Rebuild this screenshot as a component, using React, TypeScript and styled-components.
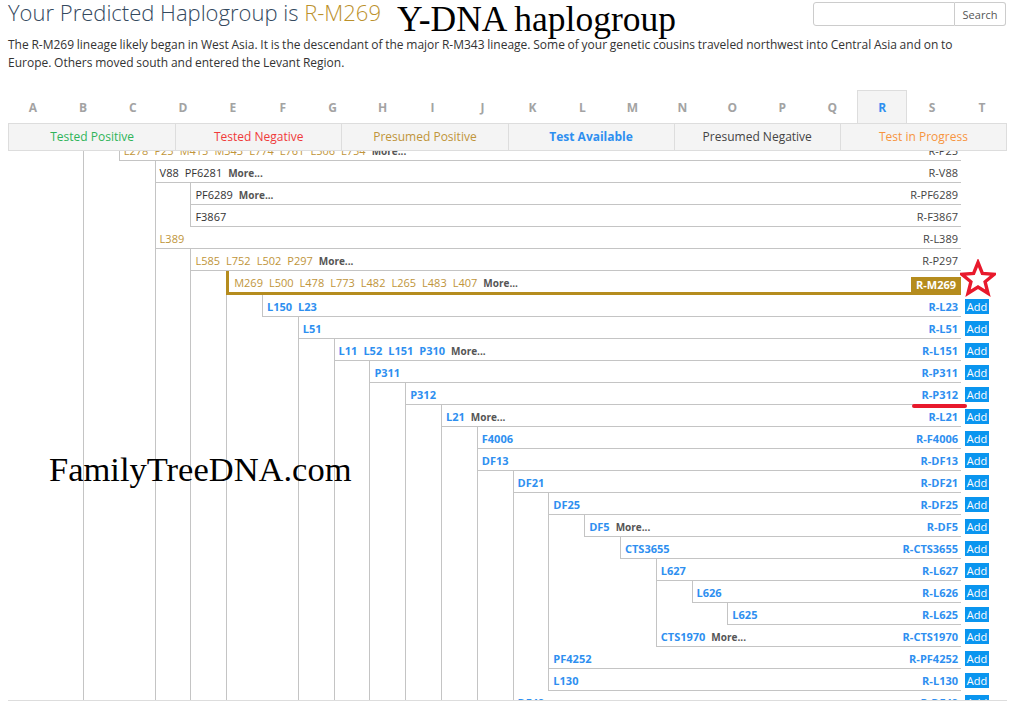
import React from "react"
import styled, { createGlobalStyle } from "styled-components"

type Kind = "pp" | "pn" | "ta" | "cur"

interface HapNode {
  snps: string
  name: string
  kind: Kind
  more?: boolean
  last?: boolean
  kids?: HapNode[]
}

const LINE = "#c4c4c4"
const GOLD = "#b58c1e"
const BLUE = "#2e8ff0"

const tree: HapNode[] = [
  {
    kind: "pp",
    snps: "M173 M306 P225 P231 P233",
    more: true,
    name: "R-M173",
    kids: [
      {
        kind: "pp",
        snps: "L278 P25 M415 M343 L774 L761 L506 L754",
        more: true,
        name: "R-P25",
        last: true,
        kids: [
          {
            kind: "pn",
            snps: "V88 PF6281",
            more: true,
            name: "R-V88",
            kids: [
              { kind: "pn", snps: "PF6289", more: true, name: "R-PF6289" },
              { kind: "pn", snps: "F3867", name: "R-F3867", last: true },
            ],
          },
          {
            kind: "pp",
            snps: "L389",
            name: "R-L389",
            kids: [
              {
                kind: "pp",
                snps: "L585 L752 L502 P297",
                more: true,
                name: "R-P297",
                kids: [
                  {
                    kind: "cur",
                    snps: "M269 L500 L478 L773 L482 L265 L483 L407",
                    more: true,
                    name: "R-M269",
                    kids: [
                      {
                        kind: "ta",
                        snps: "L150 L23",
                        name: "R-L23",
                        last: true,
                        kids: [
                          {
                            kind: "ta",
                            snps: "L51",
                            name: "R-L51",
                            kids: [
                              {
                                kind: "ta",
                                snps: "L11 L52 L151 P310",
                                more: true,
                                name: "R-L151",
                                kids: [
                                  {
                                    kind: "ta",
                                    snps: "P311",
                                    name: "R-P311",
                                    kids: [
                                      {
                                        kind: "ta",
                                        snps: "P312",
                                        name: "R-P312",
                                        kids: [
                                          {
                                            kind: "ta",
                                            snps: "L21",
                                            more: true,
                                            name: "R-L21",
                                            kids: [
                                              { kind: "ta", snps: "F4006", name: "R-F4006" },
                                              {
                                                kind: "ta",
                                                snps: "DF13",
                                                name: "R-DF13",
                                                kids: [
                                                  {
                                                    kind: "ta",
                                                    snps: "DF21",
                                                    name: "R-DF21",
                                                    kids: [
                                                      {
                                                        kind: "ta",
                                                        snps: "DF25",
                                                        name: "R-DF25",
                                                        kids: [
                                                          {
                                                            kind: "ta",
                                                            snps: "DF5",
                                                            more: true,
                                                            name: "R-DF5",
                                                            last: true,
                                                            kids: [
                                                              {
                                                                kind: "ta",
                                                                snps: "CTS3655",
                                                                name: "R-CTS3655",
                                                                last: true,
                                                                kids: [
                                                                  {
                                                                    kind: "ta",
                                                                    snps: "L627",
                                                                    name: "R-L627",
                                                                    kids: [
                                                                      {
                                                                        kind: "ta",
                                                                        snps: "L626",
                                                                        name: "R-L626",
                                                                        last: true,
                                                                        kids: [
                                                                          { kind: "ta", snps: "L625", name: "R-L625", last: true },
                                                                        ],
                                                                      },
                                                                    ],
                                                                  },
                                                                  { kind: "ta", snps: "CTS1970", more: true, name: "R-CTS1970", last: true },
                                                                ],
                                                              },
                                                            ],
                                                          },
                                                        ],
                                                      },
                                                      { kind: "ta", snps: "PF4252", name: "R-PF4252" },
                                                      { kind: "ta", snps: "L130", name: "R-L130", last: true },
                                                    ],
                                                  },
                                                  { kind: "ta", snps: "DF49", name: "R-DF49" },
                                                ],
                                              },
                                            ],
                                          },
                                        ],
                                      },
                                    ],
                                  },
                                ],
                              },
                            ],
                          },
                        ],
                      },
                    ],
                  },
                ],
              },
            ],
          },
        ],
      },
    ],
  },
]

const letters = "ABCDEFGHIJKLMNOPQRST".split("")

const legend = [
  { label: "Tested Positive", color: "#2fb45a" },
  { label: "Tested Negative", color: "#f03a3a" },
  { label: "Presumed Positive", color: "#c0953a" },
  { label: "Test Available", color: BLUE, bold: true },
  { label: "Presumed Negative", color: "#444" },
  { label: "Test in Progress", color: "#f7953f" },
]

function Branch({ nodes, top }: { nodes: HapNode[]; top?: boolean }) {
  return (
    <List $top={top}>
      {nodes.map((n) => (
        <Item key={n.name} $last={n.last}>
          <Row>
            <Cell $cur={n.kind === "cur"}>
              {n.snps.split(" ").map((s) => (
                <Snp key={s} $kind={n.kind}>
                  {s}
                </Snp>
              ))}
              {n.more && <More>More...</More>}
              {n.kind === "cur" ? (
                <Badge>{n.name}</Badge>
              ) : (
                <Name $blue={n.kind === "ta"}>{n.name}</Name>
              )}
            </Cell>
            <AddSlot>{n.kind === "ta" && <AddButton>Add</AddButton>}</AddSlot>
          </Row>
          {n.kids && <Branch nodes={n.kids} />}
        </Item>
      ))}
    </List>
  )
}

function Star() {
  return (
    <StarMark width="36" height="38" viewBox="0 0 36 38">
      <polygon
        points="18,3.5 22.4,14.4 34.2,15.3 25.1,22.8 28,34.3 18,28 8,34.3 10.9,22.8 1.8,15.3 13.6,14.4"
        fill="none"
        stroke="#e8192c"
        strokeWidth="3.4"
        strokeLinejoin="miter"
      />
    </StarMark>
  )
}

export default function App() {
  return (
    <>
      <GlobalStyle />
      <Page>
        <Header>
          <Title>
            Your Predicted Haplogroup is <Gold>R-M269</Gold>
          </Title>
          <SearchBox>
            <SearchInput />
            <SearchButton>Search</SearchButton>
          </SearchBox>
        </Header>
        <Intro>
          The R-M269 lineage likely began in West Asia. It is the descendant of the major R-M343
          lineage. Some of your genetic cousins traveled northwest into Central Asia and on to
          Europe. Others moved south and entered the Levant Region.
        </Intro>
        <Tabs>
          {letters.map((l) => (
            <Tab key={l} $active={l === "R"}>
              {l}
            </Tab>
          ))}
        </Tabs>
        <Legend>
          {legend.map((item) => (
            <LegendCell key={item.label} $color={item.color} $bold={item.bold}>
              {item.label}
            </LegendCell>
          ))}
        </Legend>
        <Viewport>
          <Scroller>
            <Branch nodes={tree} top />
          </Scroller>
        </Viewport>

        <Caption $x={397} $y={2} $size={35.5}>Y-DNA haplogroup</Caption>
        <Caption $x={49} $y={452} $size={34.5}>FamilyTreeDNA.com</Caption>
        <Star />
        <Underline />
      </Page>
    </>
  )
}

const GlobalStyle = createGlobalStyle`
  * { box-sizing: border-box; }
  body {
    margin: 0;
    background: #fff;
    font-family: "Open Sans", "Liberation Sans", sans-serif;
  }
`

const Page = styled.div`
  position: relative;
  padding: 0 4px 0 8px;
  height: 715px;
  overflow: hidden;
`

const Header = styled.div`
  display: flex;
  justify-content: space-between;
  align-items: flex-start;
`

const Title = styled.h1`
  margin: 0;
  font-weight: 300;
  font-size: 22px;
  line-height: 24px;
  color: #34495e;
`

const Gold = styled.span`
  color: #bb912c;
`

const SearchBox = styled.div`
  display: flex;
  margin: 2px 1px 0 0;
  height: 24px;
`

const SearchInput = styled.input`
  width: 142px;
  height: 24px;
  border: 1px solid #ccc;
  border-radius: 3px 0 0 3px;
  outline: none;
`

const SearchButton = styled.button`
  width: 51px;
  height: 24px;
  border: 1px solid #ccc;
  border-left: none;
  border-radius: 0 3px 3px 0;
  background: #fff;
  color: #555;
  font-family: "Open Sans", sans-serif;
  font-size: 11px;
  padding: 0;
`

const Intro = styled.p`
  margin: 10px 0 0;
  max-width: 990px;
  font-size: 12px;
  word-spacing: -0.4px;
  line-height: 18px;
  color: #333;
`

const Tabs = styled.div`
  margin-top: 18px;
  display: grid;
  grid-template-columns: repeat(20, 1fr);
  height: 33px;
`

const Tab = styled.div<{ $active?: boolean }>`
  display: flex;
  align-items: center;
  justify-content: center;
  font-weight: 700;
  font-size: 12px;
  color: ${(p) => (p.$active ? BLUE : "#a3a3a3")};
  background: ${(p) => (p.$active ? "#f4f4f4" : "transparent")};
  border: 1px solid ${(p) => (p.$active ? "#ddd" : "transparent")};
  border-bottom: none;
`

const Legend = styled.div`
  display: grid;
  grid-template-columns: repeat(6, 1fr);
  height: 28px;
  border: 1px solid #ddd;
  background: #f4f4f4;
`

const LegendCell = styled.div<{ $color: string; $bold?: boolean }>`
  text-align: center;
  font-size: 12px;
  line-height: 26px;
  color: ${(p) => p.$color};
  font-weight: ${(p) => (p.$bold ? 700 : 400)};
  & + & {
    border-left: 1px solid #ddd;
  }
`

const Viewport = styled.div`
  height: 550px;
  overflow: hidden;
  border-bottom: 1px solid #ddd;
`

const Scroller = styled.div`
  margin-top: -34px;
`

const List = styled.ul<{ $top?: boolean }>`
  list-style: none;
  margin: 0 0 0 ${(p) => (p.$top ? "75px" : "35.8px")};
  padding: 0;
`

const Item = styled.li<{ $last?: boolean }>`
  box-shadow: ${(p) => (p.$last ? "none" : `inset 1px 0 0 ${LINE}`)};
`

const Row = styled.div`
  display: flex;
`

const Cell = styled.div<{ $cur?: boolean }>`
  flex: 1;
  min-width: 0;
  display: flex;
  align-items: flex-start;
  height: ${(p) => (p.$cur ? "24px" : "22px")};
  padding: 3px ${(p) => (p.$cur ? "0" : "3px")} 0 ${(p) => (p.$cur ? "5px" : "4px")};
  border-left: ${(p) => (p.$cur ? `3px solid ${GOLD}` : `1px solid ${LINE}`)};
  border-bottom: ${(p) => (p.$cur ? `3px solid ${GOLD}` : `1px solid ${LINE}`)};
  font-size: 11px;
  line-height: 18px;
  white-space: nowrap;
`

const Snp = styled.span<{ $kind: Kind }>`
  margin-right: 6px;
  color: ${(p) => (p.$kind === "ta" ? BLUE : p.$kind === "pn" ? "#333" : "#c0953a")};
  font-weight: ${(p) => (p.$kind === "ta" ? 700 : 400)};
`

const More = styled.span`
  font-size: 10px;
  font-weight: 700;
  color: #555;
`

const Name = styled.span<{ $blue?: boolean }>`
  margin-left: auto;
  color: ${(p) => (p.$blue ? BLUE : "#444")};
  font-weight: ${(p) => (p.$blue ? 700 : 400)};
`

const Badge = styled.span`
  margin-left: auto;
  align-self: flex-end;
  height: 15px;
  line-height: 15px;
  padding: 0 5px;
  background: ${GOLD};
  color: #fff;
  font-weight: 700;
`

const AddSlot = styled.div`
  width: 46px;
  padding: 4px 0 0 4px;
`

const AddButton = styled.button`
  display: block;
  width: 24px;
  height: 15px;
  padding: 0;
  border: none;
  background: #0a95ef;
  color: #fff;
  font-family: "Open Sans", sans-serif;
  font-size: 11px;
  line-height: 15px;
  text-align: center;
`

const Caption = styled.div<{ $x: number; $y: number; $size: number }>`
  position: absolute;
  left: ${(p) => p.$x}px;
  top: ${(p) => p.$y}px;
  font-family: "Liberation Serif", "Times New Roman", serif;
  font-size: ${(p) => p.$size}px;
  line-height: ${(p) => p.$size}px;
  color: #000;
  white-space: nowrap;
`

const StarMark = styled.svg`
  position: absolute;
  left: 960px;
  top: 259px;
`

const Underline = styled.div`
  position: absolute;
  left: 912px;
  top: 404px;
  width: 55px;
  height: 4px;
  border-radius: 2px;
  background: #e8192c;
`
